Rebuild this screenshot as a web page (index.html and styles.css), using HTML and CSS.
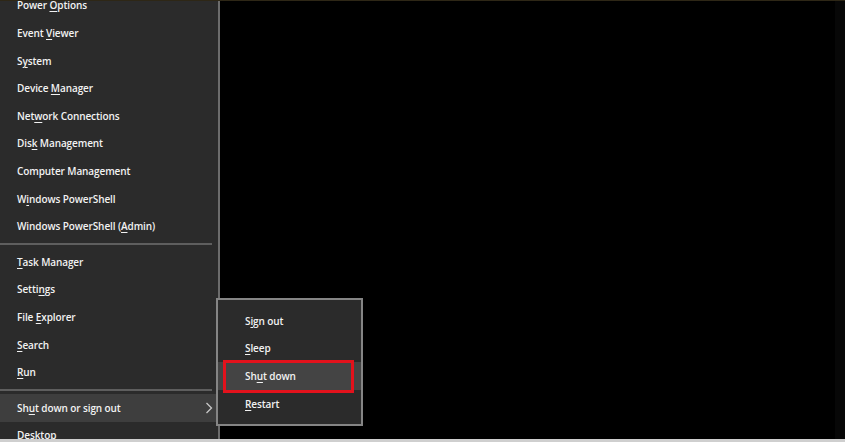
FILE: index.html
```html
<!DOCTYPE html>
<html>
<head>
<meta charset="utf-8">
<link rel="stylesheet" href="styles.css">
</head>
<body>
<div class="screen">
  <div class="topline"></div>
  <div class="main">
    <div class="panel">
      <ul class="list">
        <li class="row"><span>Power <u>O</u>ptions</span></li>
        <li class="row"><span>Event <u>V</u>iewer</span></li>
        <li class="row"><span>S<u>y</u>stem</span></li>
        <li class="row"><span>Device <u>M</u>anager</span></li>
        <li class="row"><span>Net<u>w</u>ork Connections</span></li>
        <li class="row"><span>Dis<u>k</u> Management</span></li>
        <li class="row"><span>Computer Management</span></li>
        <li class="row"><span>W<u>i</u>ndows PowerShell</span></li>
        <li class="row"><span>Windows PowerShell (<u>A</u>dmin)</span></li>
        <li class="sep"></li>
        <li class="row"><span><u>T</u>ask Manager</span></li>
        <li class="row"><span>Setti<u>n</u>gs</span></li>
        <li class="row"><span>File <u>E</u>xplorer</span></li>
        <li class="row"><span><u>S</u>earch</span></li>
        <li class="row"><span><u>R</u>un</span></li>
        <li class="sep"></li>
        <li class="row hover"><span>Sh<u>u</u>t down or sign out</span>
          <svg class="chev" width="8" height="12" viewBox="0 0 8 12"><polyline points="1.5,1 6.5,6 1.5,11" fill="none" stroke="#c8c8c8" stroke-width="1.3"/></svg>
        </li>
        <li class="row"><span><u>D</u>esktop</span></li>
      </ul>
    </div>
    <div class="desk"></div>
  </div>
  <div class="bottomline"></div>
  <ul class="submenu">
    <li class="row sub"><span>S<u>i</u>gn out</span></li>
    <li class="row sub"><span><u>S</u>leep</span></li>
    <li class="row sub active"><span>Sh<u>u</u>t down</span><span class="mark"></span></li>
    <li class="row sub"><span><u>R</u>estart</span></li>
  </ul>
</div>
</body>
</html>
```
FILE: styles.css
```css
* { box-sizing: border-box; }
html, body { margin: 0; padding: 0; background: #000; }
body { width: 845px; height: 442px; overflow: hidden; font-family: "Open Sans", "Noto Sans", sans-serif; }
.screen { position: relative; width: 845px; height: 442px; display: flex; flex-direction: column; }
.topline { height: 1px; background: #2e2716; flex: none; }
.main { flex: 1; display: flex; min-height: 0; }
.panel { width: 220px; flex: none; background: #2b2b2b; border-right: 2px solid #6c6c6c; overflow: hidden; }
.desk { flex: 1; background: #000; border-right: 10px solid #070707; }
.bottomline { height: 3px; flex: none; background: #cfcfcf; }
ul { list-style: none; margin: 0; padding: 0; }
.list { margin-top: -9.4px; }
.row { height: 27.6px; display: flex; align-items: center; padding-left: 17px; color: #f2f2f2; font-size: 10px; font-weight: 600; letter-spacing: -0.1px; position: relative; white-space: nowrap; }
.row u { text-decoration-thickness: 1px; text-underline-offset: 2px; }
.sep { height: 8px; display: flex; align-items: center; padding-right: 6px; }
.sep::before { content: ""; display: block; height: 2px; width: 100%; background: #5e5e5e; }
.hover { background: #3e3e3e; }
.chev { position: absolute; right: 5px; top: 8px; }
.submenu { position: absolute; left: 216px; top: 298px; width: 147px; padding: 7px 0; background: #2b2b2b; border: 2px solid #858585; }
.sub { padding-left: 27px; }
.active { background: #444; }
.mark { position: absolute; left: 5px; right: 7px; top: -2px; bottom: -3px; border: 3px solid #e3121c; }
```
